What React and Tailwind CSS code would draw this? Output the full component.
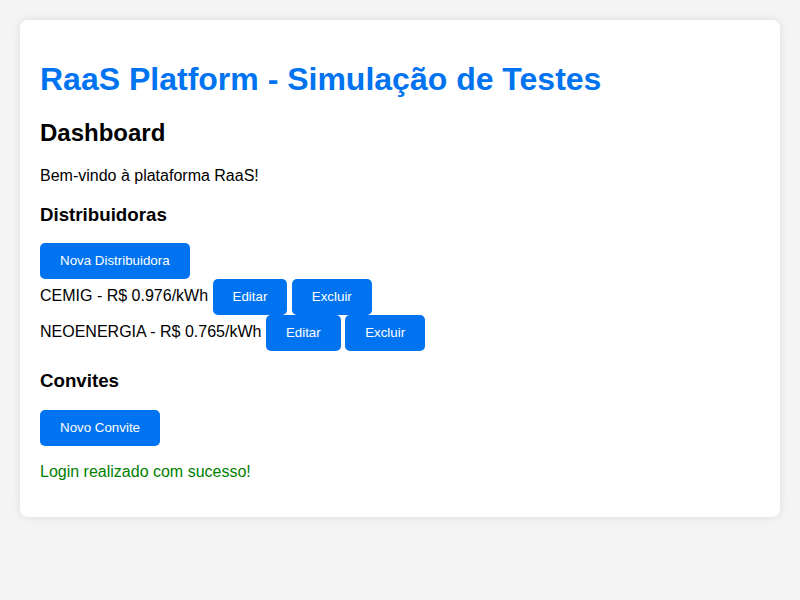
export default function App() {
  const distribuidoras = [
    { nome: 'CEMIG', tarifa: '0.976' },
    { nome: 'NEOENERGIA', tarifa: '0.765' },
  ];

  const btn =
    'inline-block bg-[#0073f0] text-white text-[13.333px] leading-[16px] px-5 py-[10px] rounded-[5px] border-0 cursor-pointer';

  return (
    <div className="min-h-screen bg-[#f4f4f4] p-5 font-['Liberation_Sans',Arial,sans-serif] text-black">
      <div className="bg-white rounded-lg p-5 shadow-[0_0_10px_rgba(0,0,0,0.1)] flow-root">
        <h1 className="text-[32px] leading-[36px] font-bold text-[#0073f0] my-[21.44px]">
          RaaS Platform - Simulação de Testes
        </h1>
        <h2 className="text-[24px] leading-[27px] font-bold mt-[19.92px] mb-[20.92px]">Dashboard</h2>
        <p className="text-[16px] leading-[18px] my-4">Bem-vindo à plataforma RaaS!</p>

        <h3 className="text-[18.72px] leading-[21.5px] font-bold mt-[18.72px] mb-[18px]">Distribuidoras</h3>
        <div>
          <button className={btn}>Nova Distribuidora</button>
        </div>
        <div>
          {distribuidoras.map((d) => (
            <div key={d.nome} className="text-[16px] leading-[18px]">
              {d.nome} - R$ {d.tarifa}/kWh <button className={btn}>Editar</button>{' '}
              <button className={btn}>Excluir</button>
            </div>
          ))}
        </div>

        <h3 className="text-[18.72px] leading-[21.5px] font-bold mt-[19.44px] mb-[18px]">Convites</h3>
        <div>
          <button className={btn}>Novo Convite</button>
        </div>

        <p className="text-[16px] leading-[18px] mt-[16.72px] mb-4 text-[#008000]">Login realizado com sucesso!</p>
      </div>
    </div>
  );
}
